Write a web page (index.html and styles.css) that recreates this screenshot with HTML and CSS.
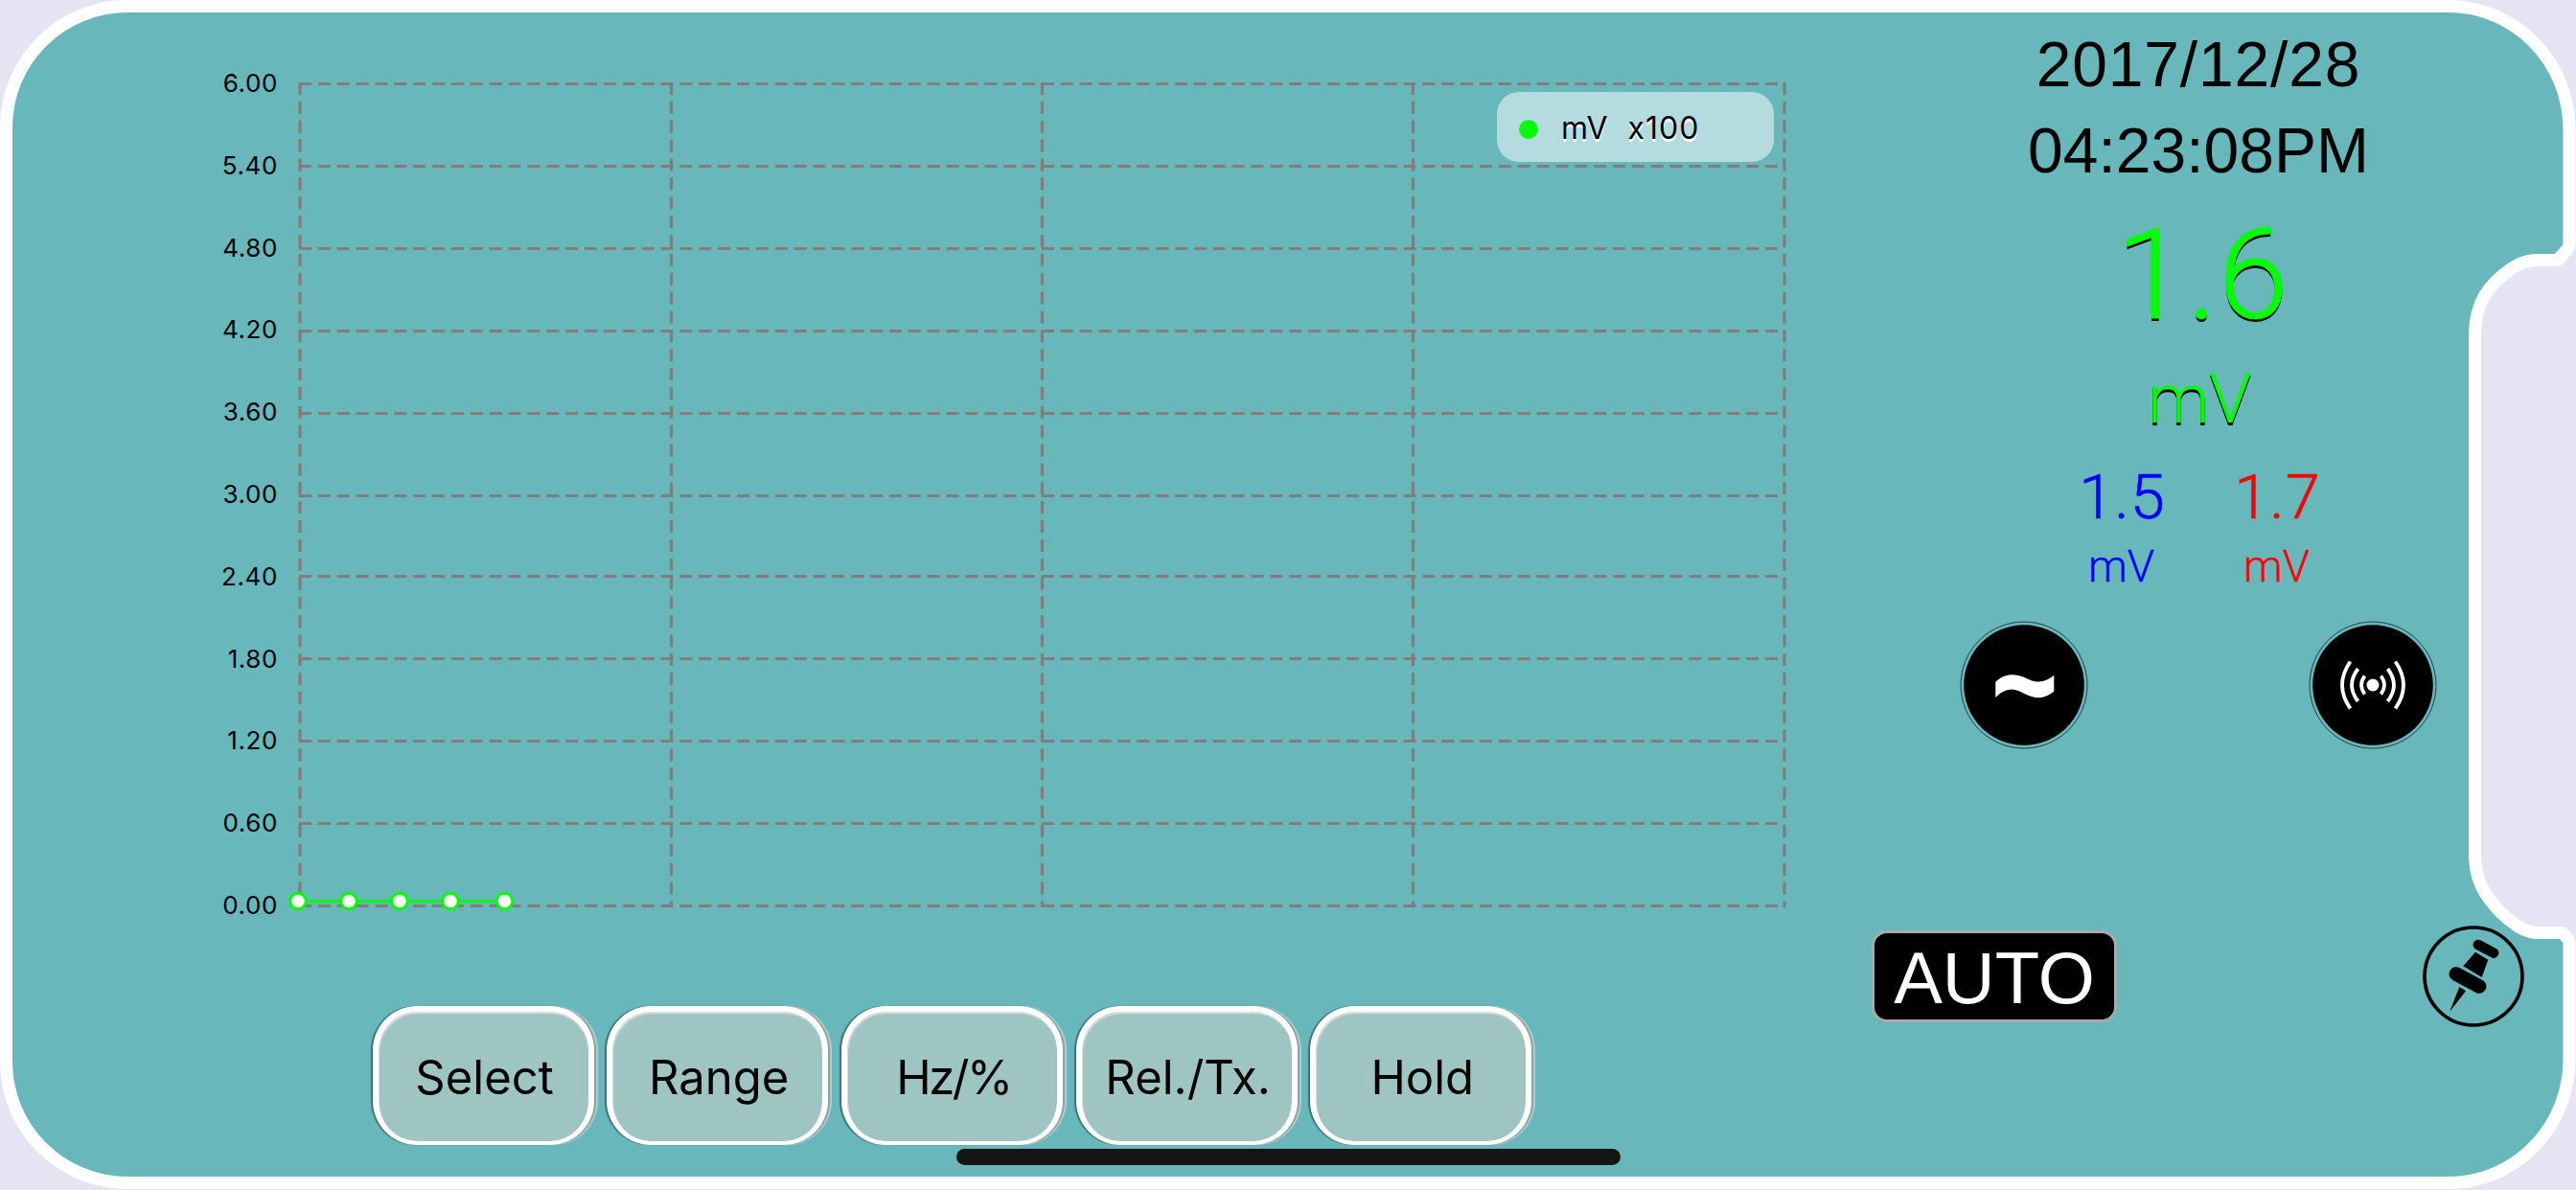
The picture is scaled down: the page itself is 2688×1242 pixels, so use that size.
FILE: index.html
```
<!DOCTYPE html>
<html lang="en">
<head>
<meta charset="utf-8">
<title>Meter</title>
<link rel="stylesheet" href="styles.css">
</head>
<body>
<div class="screen">
  <svg class="frame" viewBox="0 0 2688 1242" aria-hidden="true">
    <path d="M133 13H2555A119.500 122 0 0 1 2674.500 135V255L2666 265H2645C2632 266 2624 270 2614 277Q2597 289 2587 305Q2576 324 2576 350V895Q2577 923 2593 943Q2604 958 2618 968Q2630 978 2645 980H2671L2674.500 984V1106A119.500 122 0 0 1 2555 1228H133A120 120 0 0 1 13 1108V133A120 120 0 0 1 133 13Z"/>
  </svg>
  <main class="layout">
    <section class="left">
      <div class="chart">
        <ol class="axis">
          <li>6.00</li><li>5.40</li><li>4.80</li><li>4.20</li><li>3.60</li><li>3.00</li><li>2.40</li><li>1.80</li><li>1.20</li><li>0.60</li><li>0.00</li>
        </ol>
        <div class="plot">
          <svg class="grid" viewBox="0 0 1580 890">
            <path class="rules" d="M12 17.500H1555M12 103.500H1555M12 189.500H1555M12 275.500H1555M12 361.500H1555M12 447.500H1555M12 531.500H1555M12 617.500H1555M12 703.500H1555M12 789.500H1555M12 875.500H1555M13 16V877M400.500 16V877M787.500 16V877M1174.500 16V877M1562 16V877"/>
            <path class="trace" d="M11 870.500H226"/>
            <g class="points"><circle cx="11" cy="870.500" r="8.300"/><circle cx="64" cy="870.500" r="8.300"/><circle cx="117" cy="870.500" r="8.300"/><circle cx="170" cy="870.500" r="8.300"/><circle cx="226.500" cy="870.500" r="8.300"/></g>
          </svg>
          <div class="legend"><span class="dot"></span><span class="unit">mV</span><span class="scale">x100</span></div>
        </div>
      </div>
      <nav class="buttons">
        <button>Select</button><button>Range</button><button class="tight">Hz/%</button><button>Rel./Tx.</button><button>Hold</button>
      </nav>
    </section>
    <aside class="right">
      <div class="date">2017/12/28</div>
      <div class="time">04:23:08PM</div>
      <div class="value">1.6</div>
      <div class="value-unit">mV</div>
      <div class="extremes">
        <div class="min"><b>1.5</b><i>mV</i></div>
        <div class="max"><b>1.7</b><i>mV</i></div>
      </div>
      <div class="round">
        <svg viewBox="0 0 134 134"><circle class="halo" cx="67" cy="67" r="66"/><circle cx="67" cy="67" r="62.800"/><path class="wave" d="M37.300 63.700C44 57 53 55 61 57C70 59 75 64 82 63.500Q91 63 98.300 56.700V73.500Q91 80 82 80.300C70 80 65 72 54 71.500Q44 72 37.300 80Z"/></svg>
        <svg viewBox="0 0 134 134"><circle class="halo" cx="67" cy="67" r="66"/><circle cx="67" cy="67" r="62.800"/><circle class="core" cx="67" cy="67" r="6.500"/><path class="signal" d="M58.500 57.500Q51.500 67 58.500 76.500M75.500 57.500Q82.500 67 75.500 76.500M51.500 50Q38.500 67 51.500 84M82.500 50Q95.500 67 82.500 84M43.500 42.500Q26.500 67 43.500 91.500M90.500 42.500Q107.500 67 90.500 91.500"/></svg>
      </div>
      <div class="status">
        <span class="auto">AUTO</span>
        <svg class="pin" viewBox="0 0 108 108"><circle cx="54" cy="54" r="51"/><rect x="-14.500" y="-5.300" width="29" height="10.600" rx="5.300" transform="translate(67 25.300) rotate(28)"/><path d="M56 28.700L69.300 36.700L62.700 55L43.300 43.300Z"/><rect x="-21" y="-7.300" width="42" height="14.600" rx="7.300" transform="translate(48 58) rotate(28)"/><path d="M39.300 65L46 69.300L29.300 90.700Z"/></svg>
      </div>
    </aside>
  </main>
  <div class="home"></div>
</div>
</body>
</html>
```
FILE: styles.css
```
* { box-sizing: border-box; }
body { margin: 0; background: #e4e4f3; font-family: Inter, sans-serif; color: #000; }
.screen { position: relative; width: 2688px; height: 1242px; overflow: hidden; }
.frame { position: absolute; inset: 0; width: 2688px; height: 1242px; }
.frame path { fill: #68b7bb; stroke: #fff; stroke-width: 26px; paint-order: stroke; stroke-linejoin: round; }
.layout { position: relative; display: grid; grid-template-columns: 1900px 1fr; height: 1242px; }

.left { padding: 70px 0 0 200px; display: flex; flex-direction: column; }
.chart { display: flex; gap: 10px; height: 980px; }
.axis { list-style: none; margin: 0; padding: 0; width: 90px; text-align: right; font-size: 26px; letter-spacing: .6px; }
.axis li { height: 85.8px; line-height: 34px; }
.plot { position: relative; width: 1580px; }
.grid { display: block; width: 1580px; height: 890px; }
.rules { fill: none; stroke: #857b7b; stroke-width: 3.2px; stroke-dasharray: 13 6.870; }
.trace { stroke: #0f0; stroke-width: 3px; }
.points { fill: #fff; stroke: #0f0; stroke-width: 3px; }
.legend { position: absolute; left: 1262px; top: 26px; width: 289px; height: 73px; border-radius: 23px; background: #b4dcdf; display: flex; align-items: center; padding: 2px 0 0 23px; font-size: 32px; text-shadow: 0 3px 0 #fff; }
.dot { width: 20px; height: 20px; border-radius: 50%; background: #0f0; margin: 2px 24px 0 0; }
.unit { margin-right: 21px; }
.scale { letter-spacing: 1px; }

.buttons { display: flex; gap: 13.7px; padding-left: 188.5px; }
.buttons button { width: 231px; height: 145px; border: solid #fff; border-width: 6px 6px 4px; border-radius: 46px; background: #9fc5c3; font: 49px Inter, sans-serif; color: #000; padding: 2px 0 0 3px; box-shadow: -2px 0 1px #397275, 2px 0 0 #9b9c9e, 4px 0 1px #a5d2d4, inset 1px 2px 1px #d7dddd; white-space: nowrap; }
.buttons .tight { letter-spacing: -2.5px; }

.right { display: flex; flex-direction: column; align-items: center; width: 788px; padding-top: 22px; font-family: "Liberation Sans", Arial, sans-serif; }
.date, .time { width: 788px; height: 90px; font-size: 66px; line-height: 90px; text-align: center; }
.date { letter-spacing: .8px; }
.value { margin-top: 10px; padding-left: 9px; font: 300 132px/150px Roboto, sans-serif; letter-spacing: 1px; color: #0f0; -webkit-text-stroke: .8px #0f0; text-shadow: 0 3px 0 #000; }
.value-unit { margin-top: 9px; padding-left: 2px; font: 300 73px/90px Roboto, sans-serif; letter-spacing: -1px; color: #0f0; text-shadow: 0 3px 0 #000; }
.extremes { display: flex; width: 324px; margin-top: 18px; }
.extremes > div { width: 162px; display: flex; flex-direction: column; align-items: center; gap: 2px; }
.extremes b { padding-left: 3px; font: 300 65px/80px Roboto, sans-serif; letter-spacing: 1px; -webkit-text-stroke: .6px currentColor; }
.extremes i { padding-left: 1px; font: 300 46px/60px Roboto, sans-serif; -webkit-text-stroke: .3px currentColor; }
.min { color: #00f; }
.max { color: #f00; }
.round { display: flex; width: 498px; margin-top: 27px; justify-content: space-between; }
.round svg { width: 134px; height: 134px; }
.halo { fill: none; stroke: #263f41; stroke-width: 1px; }
.wave, .core { fill: #fff; }
.signal { fill: none; stroke: #fff; stroke-width: 3.8px; }
.status { display: flex; width: 682px; margin-top: 183px; justify-content: space-between; }
.auto { width: 256px; height: 96px; margin-top: 6px; padding-top: 2px; border: 3px solid #aaa; border-radius: 16px; background: #000; color: #fff; text-align: center; font-size: 76px; line-height: 90px; }
.pin { width: 108px; height: 108px; }
.pin > circle { fill: none; stroke: #000; stroke-width: 3.6px; }

.home { position: absolute; left: 998px; top: 1199px; width: 693px; height: 17px; border-radius: 9px; background: #151515; }
```
